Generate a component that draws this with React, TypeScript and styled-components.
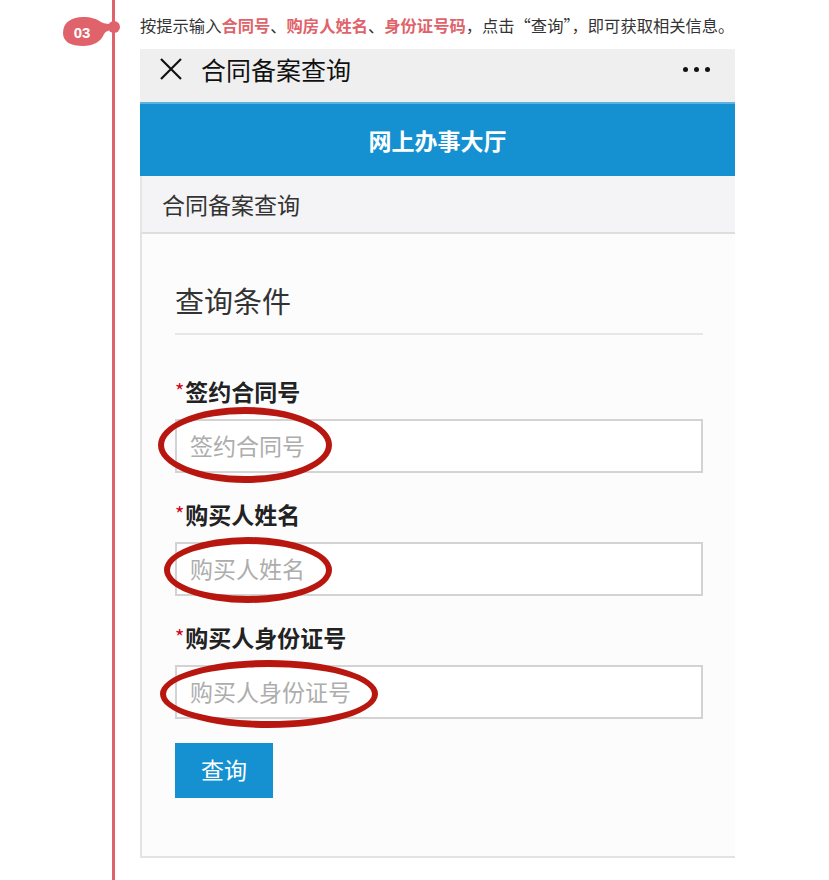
import React from 'react';
import styled, {createGlobalStyle} from "styled-components";

const GlobalStyle = createGlobalStyle`
    html, body {
        margin: 0;
        padding: 0;
        background: #ffffff;
    }
    body {
        font-family: "Noto Sans CJK SC", "Noto Sans", sans-serif;
        overflow: hidden;
    }
`;

const fields = [
    {label: "签约合同号", ring: {left: -17, top: -12, width: 174, height: 76}},
    {label: "购买人姓名", ring: {left: -11, top: -5, width: 168, height: 66}},
    {label: "购买人身份证号", ring: {left: -15, top: -5, width: 218, height: 68}},
];

const App = () =>
    <Page>
        <GlobalStyle/>
        <Gutter>
            <Rail/>
            <Badge width="64" height="44" viewBox="0 0 64 44">
                <path d="M3 28 C3 17 12 12 23 12 C31 12 37 14 41 17 C45 19 49 19 52 19 L52 25 C49 25 46 26 44 29 C41 37 33 41 23 41 C11 41 3 37 3 28 Z" fill="#e0636b"/>
                <circle cx="54" cy="22" r="6" fill="#e0636b"/>
                <text x="22" y="33" textAnchor="middle" fill="#fff" fontSize="15" fontWeight="700" fontFamily="Liberation Sans, Arial, sans-serif">03</text>
            </Badge>
        </Gutter>
        <Content>
            <Instruction>
                按提示输入<Mark>合同号</Mark>、<Mark>购房人姓名</Mark>、<Mark>身份证号码</Mark>，点击“查询”，即可获取相关信息。
            </Instruction>
            <Phone>
                <TopBar>
                    <svg width="24" height="24" viewBox="0 0 24 24">
                        <path d="M2 2 L22 22 M22 2 L2 22" stroke="#111" strokeWidth="2.2" fill="none"/>
                    </svg>
                    <TopTitle>合同备案查询</TopTitle>
                    <Dots>
                        <Dot/><Dot/><Dot/>
                    </Dots>
                </TopBar>
                <BlueBar>网上办事大厅</BlueBar>
                <SubHeader>合同备案查询</SubHeader>
                <Panel>
                    <Heading>查询条件</Heading>
                    <Divider/>
                    {fields.map((f, i) =>
                        <Field key={f.label} first={i === 0}>
                            <Label><Star>*</Star>{f.label}</Label>
                            <InputWrap>
                                <Input placeholder={f.label}/>
                                <Ring style={{left: f.ring.left, top: f.ring.top, width: f.ring.width, height: f.ring.height}}/>
                            </InputWrap>
                        </Field>
                    )}
                    <Button>查询</Button>
                </Panel>
            </Phone>
        </Content>
    </Page>
;

/////////////////////////////// PAGE /////////////////////////////////
const Page = styled.div`
    display: flex;
    flex-direction: row;
    width: 829px;
    height: 880px;
    overflow: hidden;
`;

const Gutter = styled.div`
    position: relative;
    width: 140px;
    flex-shrink: 0;
    display: flex;
`;

const Rail = styled.div`
    width: 3px;
    height: 100%;
    margin-left: 112px;
    background: #e0636b;
`;

const Badge = styled.svg`
    position: absolute;
    left: 60px;
    top: 5px;
`;

const Content = styled.div`
    width: 595px;
    display: flex;
    flex-direction: column;
`;

const Instruction = styled.div`
    height: 49px;
    box-sizing: border-box;
    padding-top: 15px;
    font-size: 16.3px;
    line-height: 20px;
    color: #333;
    white-space: nowrap;
`;

const Mark = styled.span`
    color: #e0636b;
    font-weight: 700;
`;

/////////////////////////////// PHONE /////////////////////////////////
const Phone = styled.div`
    display: flex;
    flex-direction: column;
`;

const TopBar = styled.div`
    height: 53px;
    background: #efefef;
    display: flex;
    align-items: flex-start;
    padding: 8px 25px 0 19px;
    box-sizing: border-box;
    svg { margin-top: 0px; }
`;

const TopTitle = styled.div`
    margin-left: 18px;
    margin-top: -6px;
    font-size: 25px;
    line-height: 36px;
    color: #111;
    flex: 1;
`;

const Dots = styled.div`
    display: flex;
    gap: 6px;
    margin-top: 10px;
`;

const Dot = styled.span`
    width: 5px;
    height: 5px;
    border-radius: 50%;
    background: #111;
`;

const BlueBar = styled.div`
    height: 74px;
    background: #1591d2;
    border-top: 2px solid #5cb3e0;
    box-sizing: border-box;
    display: flex;
    align-items: center;
    justify-content: center;
    color: #fff;
    font-size: 23px;
    font-weight: 700;
`;

const SubHeader = styled.div`
    height: 58px;
    box-sizing: border-box;
    background: #f4f4f6;
    border-bottom: 2px solid #dedede;
    border-left: 2px solid #e6e6e6;
    display: flex;
    align-items: center;
    padding-left: 20px;
    font-size: 23px;
    color: #333;
`;

const Panel = styled.div`
    background: #fcfcfd;
    border-left: 2px solid #e3e3e3;
    border-bottom: 2px solid #e3e3e3;
    padding: 46px 32px 58px 33px;
    display: flex;
    flex-direction: column;
    align-items: flex-start;
`;

const Heading = styled.div`
    font-size: 29px;
    line-height: 40px;
    color: #333;
`;

const Divider = styled.div`
    align-self: stretch;
    height: 2px;
    margin-top: 13px;
    background: #e7e7e7;
`;

const Field = styled.div<{first?: boolean}>`
    align-self: stretch;
    margin-top: ${props => props.first ? "41px" : "26px"};
    display: flex;
    flex-direction: column;
`;

const Label = styled.div`
    font-size: 23px;
    line-height: 30px;
    font-weight: 700;
    color: #222;
    display: flex;
    align-items: center;
`;

const Star = styled.span`
    color: #d0021b;
    font-size: 20px;
    font-weight: 400;
    margin-right: 1px;
`;

const InputWrap = styled.div`
    position: relative;
    margin-top: 13px;
`;

const Input = styled.input`
    display: block;
    width: 100%;
    height: 54px;
    box-sizing: border-box;
    border: 2px solid #d3d3d3;
    background: #fff;
    padding: 0 0 2px 13px;
    font-family: "Noto Sans CJK SC", "Noto Sans", sans-serif;
    font-size: 23px;
    outline: none;
    &::placeholder {
        color: #adadad;
    }
`;

const Ring = styled.div`
    position: absolute;
    box-sizing: border-box;
    border: 7px solid #b8170f;
    border-left-width: 6px;
    border-right-width: 6px;
    border-radius: 50%;
    pointer-events: none;
`;

const Button = styled.button`
    margin-top: 24px;
    width: 98px;
    height: 55px;
    border: none;
    background: #1591d2;
    color: #fff;
    font-family: "Noto Sans CJK SC", "Noto Sans", sans-serif;
    font-size: 23px;
    padding: 0 0 3px 0;
`;

export default App;
